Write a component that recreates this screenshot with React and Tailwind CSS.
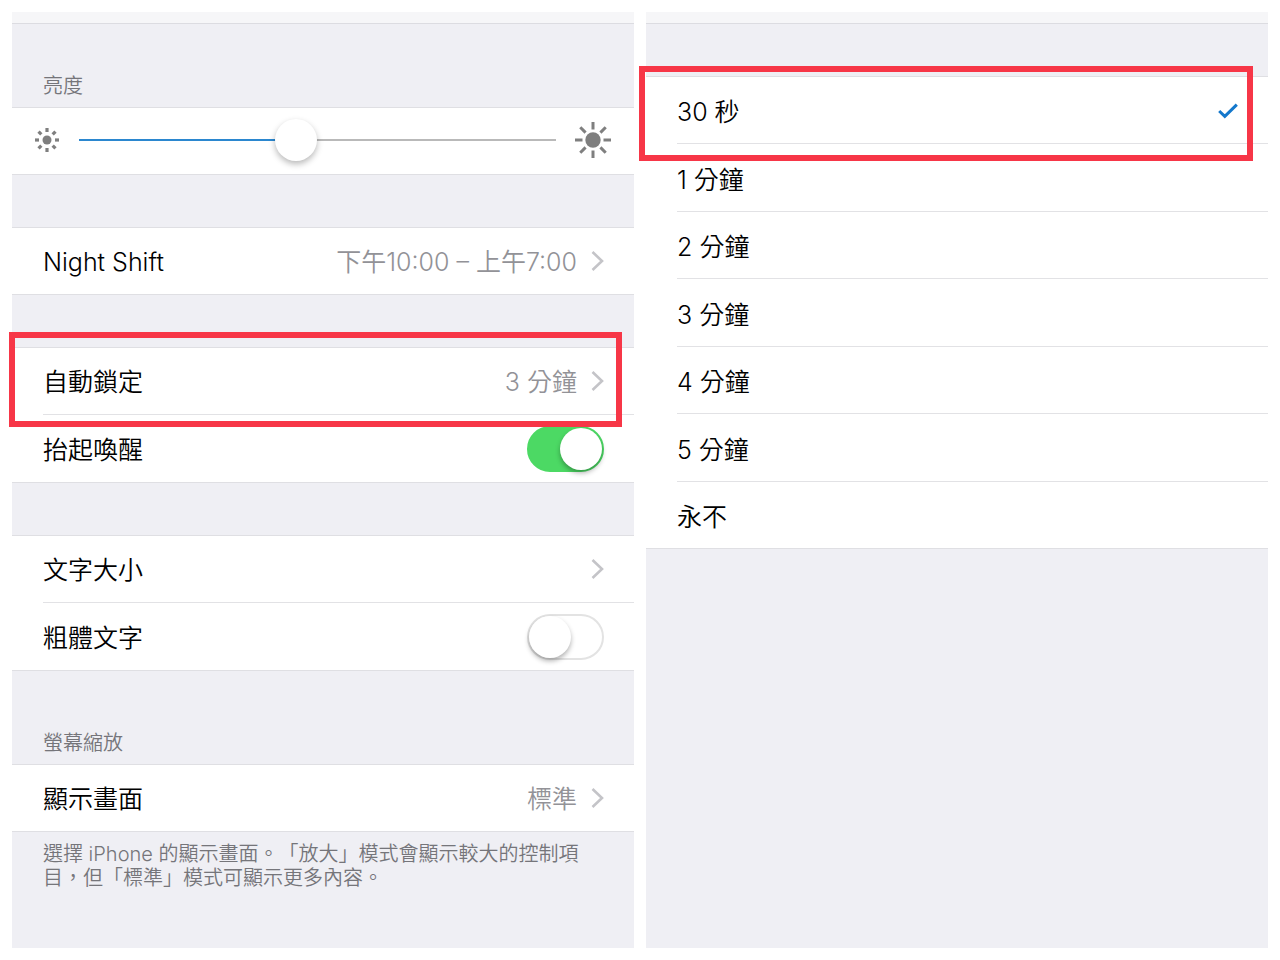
import React, { useState } from "react";

const lockOptions = ["30 秒", "1 分鐘", "2 分鐘", "3 分鐘", "4 分鐘", "5 分鐘", "永不"];

const rays = [0, 45, 90, 135, 180, 225, 270, 315];

const SmallSun = () => (
  <svg width="26" height="26" viewBox="-13 -13 26 26" className="shrink-0" aria-hidden="true">
    <circle r="4.5" fill="#7f7f7f" />
    {rays.map((angle) => (
      <line
        key={angle}
        y1="-8"
        y2="-12"
        stroke="#7f7f7f"
        strokeWidth="3.2"
        transform={`rotate(${angle})`}
      />
    ))}
  </svg>
);

const LargeSun = () => (
  <svg width="36" height="36" viewBox="-18 -18 36 36" className="shrink-0" aria-hidden="true">
    <circle r="7.7" fill="#7f7f7f" />
    {rays.map((angle) => (
      <line
        key={angle}
        y1="-10.5"
        y2="-18"
        stroke="#7f7f7f"
        strokeWidth="3"
        transform={`rotate(${angle})`}
      />
    ))}
  </svg>
);

const Chevron = () => (
  <svg width="13" height="20" viewBox="0 0 13 20" className="shrink-0" aria-hidden="true">
    <path d="M1.5 1 L11 10 L1.5 19" fill="none" stroke="#c4c4c8" strokeWidth="2.6" />
  </svg>
);

const Check = () => (
  <svg width="20" height="16" viewBox="0 0 20 16" className="shrink-0" aria-hidden="true">
    <path d="M1.2 8 L6.8 13.4 L18.8 1.6" fill="none" stroke="#1478cc" strokeWidth="3" />
  </svg>
);

// Frame drawn over a row to call it out
const Highlight = ({ className }) => (
  <div
    className={`absolute z-10 h-[95px] border-6 border-[#f73647] pointer-events-none ${className}`}
  />
);

const Panel = ({ children }) => (
  <section className="flex-1 min-w-0 bg-[#efeff4]">
    <div className="h-3 bg-[#f6f6f8] border-b border-[#dcdce1]" />
    {children}
  </section>
);

const Group = ({ children, highlight, className = "" }) => (
  <div className={`relative bg-white border-y border-[#dfdfe3] ${className}`}>
    <div>{children}</div>
    {highlight ? <Highlight className={highlight} /> : null}
  </div>
);

const rowClass =
  "ml-[31px] pr-[30px] odd:h-[67px] even:h-[68px] odd:last:h-[66px] even:last:h-[67px] flex items-center justify-between border-b border-[#e2e2e5] last:border-b-0";

const headingClass = "px-[31px] pb-[7px] flex items-end text-xl leading-7 text-[#75757a]";

const LinkRow = ({ label, value }) => (
  <div className={rowClass}>
    <button type="button" className="flex-1 h-full flex items-center gap-[14px] text-left">
      <span className="flex-1 pt-0.5">{label}</span>
      {value ? <span className="pt-0.5 text-[#929297]">{value}</span> : null}
      <Chevron />
    </button>
  </div>
);

const SwitchRow = ({ id, label, defaultChecked = false }) => (
  <div className={rowClass}>
    <label htmlFor={id} className="pt-0.5">
      {label}
    </label>
    <input
      id={id}
      type="checkbox"
      role="switch"
      defaultChecked={defaultChecked}
      className="appearance-none w-[77px] h-[46px] shrink-0 rounded-full border-2 border-[#e3e3e3] bg-white checked:border-[#4cd964] checked:bg-[#4cd964] before:block before:size-[42px] before:rounded-full before:bg-white before:shadow-[0_3px_5px_rgba(0,0,0,0.3)] checked:before:ml-[31px]"
    />
  </div>
);

const DisplaySettings = () => {
  const [brightness, setBrightness] = useState(45);

  return (
    <Panel>
      <h2 className={`h-[83px] ${headingClass}`}>
        <label htmlFor="brightness">亮度</label>
      </h2>
      <Group>
        <div className="h-[66px] pl-[22px] pr-[23px] pb-[3px] flex items-center gap-[19px]">
          <SmallSun />
          <input
            id="brightness"
            type="range"
            value={brightness}
            onChange={(event) => setBrightness(Number(event.target.value))}
            style={{ "--level": `${brightness}%` }}
            className="appearance-none flex-1 min-w-0 h-[42px] bg-transparent [&::-webkit-slider-runnable-track]:h-[2px] [&::-webkit-slider-runnable-track]:bg-[linear-gradient(to_right,#2b87cf_var(--level),#b9b9b9_var(--level))] [&::-webkit-slider-thumb]:appearance-none [&::-webkit-slider-thumb]:-mt-5 [&::-webkit-slider-thumb]:size-[42px] [&::-webkit-slider-thumb]:rounded-full [&::-webkit-slider-thumb]:bg-white [&::-webkit-slider-thumb]:shadow-[0_3px_6px_rgba(0,0,0,0.28)]"
          />
          <LargeSun />
        </div>
      </Group>

      <Group className="mt-[52px]">
        <LinkRow label="Night Shift" value="下午10:00 – 上午7:00" />
      </Group>

      <Group className="mt-[52px]" highlight="-top-4 -left-[3px] right-3">
        <LinkRow label="自動鎖定" value="3 分鐘" />
        <SwitchRow id="raise-to-wake" label="抬起喚醒" defaultChecked />
      </Group>

      <Group className="mt-[52px]">
        <LinkRow label="文字大小" />
        <SwitchRow id="bold-text" label="粗體文字" />
      </Group>

      <h2 className={`h-[93px] ${headingClass}`}>螢幕縮放</h2>
      <Group>
        <LinkRow label="顯示畫面" value="標準" />
      </Group>
      <p className="pt-[10px] pl-[31px] pr-[46px] text-xl leading-6 text-[#75757a] [text-spacing-trim:space-all]">
        選擇 iPhone 的顯示畫面。「放大」模式會顯示較大的控制項目，但「標準」模式可顯示更多內容。
      </p>
    </Panel>
  );
};

const AutoLock = () => {
  const [selected, setSelected] = useState("30 秒");

  return (
    <Panel>
      <Group className="mt-[52px]" highlight="-top-[11px] -left-[7px] right-[15px]">
        {lockOptions.map((option) => (
          <label key={option} className={`pt-0.5 ${rowClass}`}>
            <input
              type="radio"
              name="auto-lock"
              checked={selected === option}
              onChange={() => setSelected(option)}
              className="sr-only"
            />
            <span className="pt-0.5">{option}</span>
            {selected === option ? <Check /> : null}
          </label>
        ))}
      </Group>
    </Panel>
  );
};

const App = () => (
  <main
    lang="zh-Hant"
    className="min-h-screen p-3 flex gap-3 bg-white text-black text-[25px] leading-8 font-[350] font-['Inter','Noto_Sans_CJK_TC',sans-serif]"
  >
    <DisplaySettings />
    <AutoLock />
  </main>
);

export default App;
